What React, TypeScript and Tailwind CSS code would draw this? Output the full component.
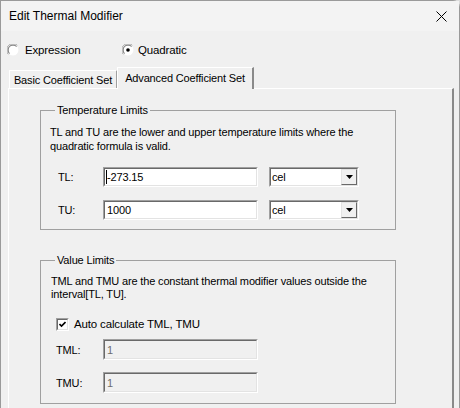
import type { ReactNode } from 'react';

const font = { fontFamily: '"Liberation Sans", Arial, sans-serif' };

function Radio({ checked }: { checked?: boolean }) {
  return (
    <svg width="12" height="12" viewBox="0 0 12 12" className="shrink-0">
      <circle cx="6" cy="6" r="5.5" fill="#fff" />
      <path d="M1.5 10.5 A5.5 5.5 0 0 1 10.5 1.5" fill="none" stroke="#a0a0a0" strokeWidth="1" />
      <path d="M2.5 9.5 A4.2 4.2 0 0 1 9.5 2.5" fill="none" stroke="#696969" strokeWidth="1" />
      <path d="M10.5 1.5 A5.5 5.5 0 0 1 1.5 10.5" fill="none" stroke="#f0f0f0" strokeWidth="1" />
      {checked && <circle cx="6" cy="6" r="1.8" fill="#000" />}
    </svg>
  );
}

function Sunken({ children, disabled, className }: { children?: ReactNode; disabled?: boolean; className?: string }) {
  return (
    <div className={`border border-t-[#a0a0a0] border-l-[#a0a0a0] border-b-white border-r-white ${className ?? ''}`}>
      <div
        className={
          disabled
            ? 'h-full border border-t-[#696969] border-l-[#696969] border-b-[#e3e3e3] border-r-[#e3e3e3] bg-[#f0f0f0] flex items-center'
            : 'h-full border border-t-[#696969] border-l-[#696969] border-b-[#e3e3e3] border-r-[#e3e3e3] bg-white flex items-center'
        }
      >
        {children}
      </div>
    </div>
  );
}

function Combo({ value }: { value: string }) {
  return (
    <Sunken className="w-[90px] h-[20px]">
      <span className="flex-1 pl-[1px] text-black">{value}</span>
      <div className="w-[16px] h-full border border-t-[#e3e3e3] border-l-[#e3e3e3] border-b-[#696969] border-r-[#696969] bg-[#f0f0f0] flex items-center justify-center">
        <svg width="7" height="4" viewBox="0 0 7 4">
          <path d="M0 0 H7 L3.5 4 Z" fill="#000" />
        </svg>
      </div>
    </Sunken>
  );
}

export default function App() {
  return (
    <div className="w-[460px] h-[408px] overflow-hidden bg-[#dcdcdc] text-[11px] tracking-[-0.15px] leading-[14px] text-black" style={font}>
      <div className="w-[460px] h-[408px] bg-[#f0f0f0] border-l border-t border-r border-[#9a9a9a] rounded-tr-[7px] flex flex-col">
        {/* title bar */}
        <div className="h-[30px] bg-[#f3f3f3] flex items-center justify-between pl-[8px] pr-[12px] shrink-0">
          <span className="text-[12px] tracking-normal">Edit Thermal Modifier</span>
          <svg width="11" height="11" viewBox="0 0 11 11">
            <path d="M0.5 0.5 L10.5 10.5 M10.5 0.5 L0.5 10.5" stroke="#000" strokeWidth="1" />
          </svg>
        </div>

        {/* radios */}
        <div className="h-[37px] flex items-center pl-[6px] shrink-0 text-[11.5px]">
          <div className="flex items-center gap-[6px] w-[115px]">
            <Radio />
            <span>Expression</span>
          </div>
          <div className="flex items-center gap-[4px]">
            <Radio checked />
            <span>Quadratic</span>
          </div>
        </div>

        {/* tabs */}
        <div className="h-[20px] flex items-end pl-[8px] shrink-0 whitespace-nowrap">
          <div className="w-[108px] h-[18px] border-t border-l border-white border-r border-r-[#a0a0a0] rounded-t-[1px] flex items-center justify-center">
            Basic Coefficient Set
          </div>
          <div className="relative z-10 -mb-px w-[137px] h-[22px] bg-[#f0f0f0] border-t border-l border-white border-r-2 border-r-[#8a8a8a] flex items-start justify-center pt-[3px]">
            Advanced Coefficient Set
          </div>
        </div>

        {/* panel */}
        <div className="flex-1 ml-[7px] w-[446px] border-t border-l border-white border-r-2 border-r-[#8a8a8a] pl-[31px] pt-[14px]">
          <fieldset className="w-[356px] border border-[#a0a0a0] px-[9px] pb-[9px]">
            <legend className="ml-[5px] px-[2px]">Temperature Limits</legend>
            <p className="pt-[8px] leading-[14px]">
              TL and TU are the lower and upper temperature limits where the quadratic formula is valid.
            </p>
            <div className="mt-[14px] flex items-center">
              <span className="w-[53px] pl-[8px]">TL:</span>
              <Sunken className="w-[155px] h-[20px]">
                <span className="pl-[1px] flex items-center">
                  <span className="w-px h-[14px] bg-black" />
                  <span>-273.15</span>
                </span>
              </Sunken>
              <div className="ml-[11px]">
                <Combo value="cel" />
              </div>
            </div>
            <div className="mt-[13px] flex items-center">
              <span className="w-[53px] pl-[8px]">TU:</span>
              <Sunken className="w-[155px] h-[20px]">
                <span className="pl-[2px]">1000</span>
              </Sunken>
              <div className="ml-[11px]">
                <Combo value="cel" />
              </div>
            </div>
          </fieldset>

          <fieldset className="mt-[23px] w-[356px] border border-[#a0a0a0] px-[9px] pb-[10px]">
            <legend className="ml-[5px] px-[2px]">Value Limits</legend>
            <p className="pt-[8px] pl-[1px] leading-[13px]">
              TML and TMU are the constant thermal modifier values outside the interval[TL, TU].
            </p>
            <div className="mt-[16px] pl-[6px] flex items-center gap-[5px]">
              <div className="w-[13px] h-[13px] border border-t-[#a0a0a0] border-l-[#a0a0a0] border-b-white border-r-white">
                <div className="w-full h-full border border-t-[#696969] border-l-[#696969] border-b-[#e3e3e3] border-r-[#e3e3e3] bg-white flex items-center justify-center">
                  <svg width="7" height="7" viewBox="0 0 7 7">
                    <path d="M0.5 3 L2.5 5 L6.5 1" fill="none" stroke="#000" strokeWidth="1.6" />
                  </svg>
                </div>
              </div>
              <span className="text-[11.5px]">Auto calculate TML, TMU</span>
            </div>
            <div className="mt-[8px] flex items-center">
              <span className="w-[53px] pl-[6px]">TML:</span>
              <Sunken disabled className="w-[155px] h-[21px]">
                <span className="pl-[2px] text-[#6d6d6d]">1</span>
              </Sunken>
            </div>
            <div className="mt-[12px] flex items-center">
              <span className="w-[53px] pl-[6px]">TMU:</span>
              <Sunken disabled className="w-[155px] h-[21px]">
                <span className="pl-[2px] text-[#6d6d6d]">1</span>
              </Sunken>
            </div>
          </fieldset>
        </div>
      </div>
    </div>
  );
}
